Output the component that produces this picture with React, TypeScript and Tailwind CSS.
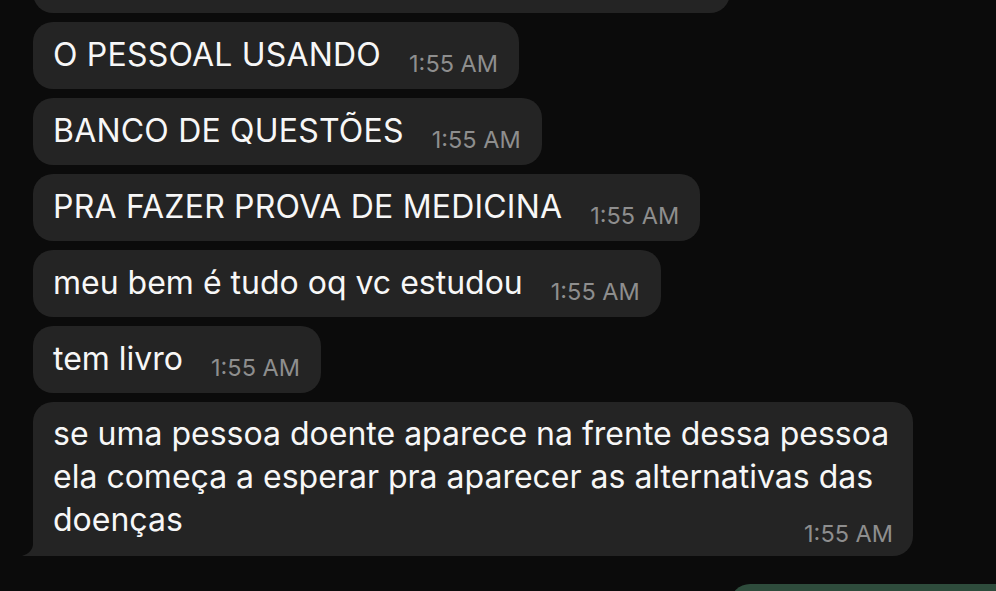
const messages: string[] = [
  "O PESSOAL USANDO",
  "BANCO DE QUESTÕES",
  "PRA FAZER PROVA DE MEDICINA",
  "meu bem é tudo oq vc estudou",
  "tem livro",
];

const longLines: string[] = [
  "se uma pessoa doente aparece na frente dessa pessoa",
  "ela começa a esperar pra aparecer as alternativas das",
  "doenças",
];

function Time() {
  return (
    <span className="text-[23.5px] leading-[23px] text-[#8e8e8e] whitespace-nowrap">
      1:55 AM
    </span>
  );
}

export default function App() {
  return (
    <div className="w-full h-screen overflow-hidden bg-[#0b0b0b] font-['Inter','Noto_Sans',sans-serif] text-[#f7f7f7]">
      <div className="flex flex-col items-start gap-[9px] pl-[33px]">
        {/* previous message, cut off at the top */}
        <div className="w-[697px] h-[67px] -mt-[54px] rounded-[20px] bg-[#242424]" />

        {messages.map((text, i) => (
          <div
            key={i}
            className="flex items-end rounded-[20px] bg-[#242424] pt-3 pb-[11px] pl-5 pr-[21px]"
          >
            <span
              className={
                text === text.toUpperCase()
                  ? "text-[32px] leading-[42px] mb-[2px] whitespace-nowrap tracking-[0.2px]"
                  : "text-[32px] leading-[42px] mb-[2px] whitespace-nowrap"
              }
            >
              {text}
            </span>
            <span className="ml-7">
              <Time />
            </span>
          </div>
        ))}

        <div className="relative rounded-[20px] rounded-bl-none bg-[#242424] pt-[10px] pb-[11px] pl-5 pr-5 w-[880px]">
          <div className="text-[32px] leading-[43px]">
            {longLines.map((line, i) => (
              <div key={i} className="whitespace-nowrap">
                {line}
              </div>
            ))}
          </div>
          <div className="flex justify-end -mt-[19px]">
            <Time />
          </div>
          <svg
            className="absolute -left-[11px] bottom-0"
            width="30"
            height="22"
            viewBox="0 0 30 22"
          >
            <path d="M11 0 V10 C11 15 7 20 0 22 H30 V0 Z" fill="#242424" />
          </svg>
        </div>

        <div className="ml-[697px] mt-[19px] w-[320px] h-[67px] rounded-[20px] bg-[#2e4c3c]" />
      </div>
    </div>
  );
}
